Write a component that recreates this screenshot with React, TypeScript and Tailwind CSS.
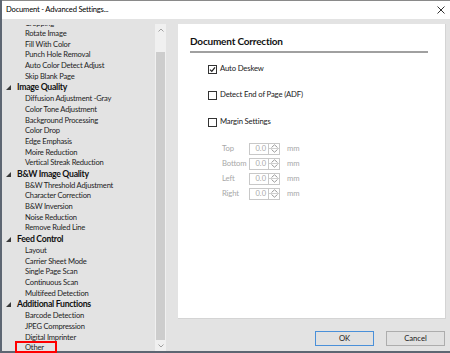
import React from "react";

const Tri = () => (
  <svg width="5" height="5" viewBox="0 0 5 5" className="shrink-0">
    <polygon points="5,0 5,5 0,5" fill="#3a3a3a" />
  </svg>
);

type Group = { title?: string; items: string[] };

const groups: Group[] = [
  { items: ["Cropping", "Rotate Image", "Fill With Color", "Punch Hole Removal", "Auto Color Detect Adjust", "Skip Blank Page"] },
  {
    title: "Image Quality",
    items: ["Diffusion Adjustment -Gray", "Color Tone Adjustment", "Background Processing", "Color Drop", "Edge Emphasis", "Moire Reduction", "Vertical Streak Reduction"],
  },
  { title: "B&W Image Quality", items: ["B&W Threshold Adjustment", "Character Correction", "B&W Inversion", "Noise Reduction", "Remove Ruled Line"] },
  { title: "Feed Control", items: ["Layout", "Carrier Sheet Mode", "Single Page Scan", "Continuous Scan", "Multifeed Detection"] },
  { title: "Additional Functions", items: ["Barcode Detection", "JPEG Compression", "Digital Imprinter", "Other"] },
];

const Check = ({ checked, label }: { checked?: boolean; label: string }) => (
  <div className="flex items-center h-[12px]">
    <div className="w-[9px] h-[9px] border border-[#333] bg-white flex items-center justify-center">
      {checked && (
        <svg width="7" height="7" viewBox="0 0 7 7">
          <polyline points="1,3.6 2.8,5.4 6,1.4" fill="none" stroke="#222" strokeWidth="1.3" />
        </svg>
      )}
    </div>
    <span className="ml-[3px] text-[7.7px] tracking-[-0.15px] text-[#1a1a1a] leading-none">{label}</span>
  </div>
);

const Spin = ({ label }: { label: string }) => (
  <div className="flex items-center h-[15px]">
    <span className="w-[27px] text-[7.7px] tracking-[-0.15px] text-[#a8a8a8] leading-none">{label}</span>
    <div className="w-[20px] h-[12px] border border-[#c8c8c8] bg-white flex items-center justify-end pr-[2px]">
      <span className="text-[7.5px] text-[#a8a8a8] leading-none">0.0</span>
    </div>
    <div className="w-[11px] h-[12px] border border-l-0 border-[#c8c8c8] bg-white flex flex-col">
      <div className="flex-1 flex items-center justify-center border-b border-[#d0d0d0]">
        <svg width="7" height="4" viewBox="0 0 7 4">
          <polyline points="0.5,3.5 3.5,0.8 6.5,3.5" fill="none" stroke="#9a9a9a" strokeWidth="1" />
        </svg>
      </div>
      <div className="flex-1 flex items-center justify-center">
        <svg width="7" height="4" viewBox="0 0 7 4">
          <polyline points="0.5,0.5 3.5,3.2 6.5,0.5" fill="none" stroke="#9a9a9a" strokeWidth="1" />
        </svg>
      </div>
    </div>
    <span className="ml-[7px] text-[7.7px] text-[#a8a8a8] leading-none">mm</span>
  </div>
);

export default function App() {
  return (
    <div className="w-[450px] h-[353px] bg-[#5d6672] relative overflow-hidden font-['Lato',sans-serif]">
      <div className="ml-[2px] w-[448px] h-[351px] flex flex-col bg-[#e3e3e3] border-t border-[#8a8a8a]">
        {/* title bar */}
        <div className="h-[18px] bg-white flex items-center justify-between pl-[4px] pr-[5px] shrink-0">
          <span className="text-[7.6px] tracking-[-0.2px] text-black leading-none">Document - Advanced Settings...</span>
          <svg width="8" height="8" viewBox="0 0 8 8">
            <path d="M0.5 0.5 L7.5 7.5 M7.5 0.5 L0.5 7.5" stroke="#333" strokeWidth="1" />
          </svg>
        </div>
        <div className="flex-1 flex min-h-0">
          {/* tree */}
          <div className="w-[153px] mt-[6px] overflow-hidden">
            <div className="mt-[-7px]">
              {groups.map((g, gi) => (
                <div key={gi}>
                  {g.title && (
                    <div className="h-[12px] flex items-center pl-[4px]">
                      <Tri />
                      <span className="ml-[6px] text-[8.7px] tracking-[-0.3px] font-bold text-[#111] leading-none">{g.title}</span>
                    </div>
                  )}
                  {g.items.map((it) => (
                    <div key={it} className="h-[10.65px] flex items-center pl-[23px]">
                      <span className="text-[7.6px] tracking-[-0.2px] text-[#1e1e1e] leading-none">{it}</span>
                    </div>
                  ))}
                </div>
              ))}
            </div>
          </div>
          {/* scrollbar */}
          <div className="w-[11px] mt-[5px] bg-[#f0f0f0] flex flex-col items-center">
            <div className="h-[12px] flex items-center justify-center">
              <svg width="6" height="4" viewBox="0 0 6 4">
                <polyline points="0.5,3.5 3,1 5.5,3.5" fill="none" stroke="#a0a0a0" strokeWidth="1" />
              </svg>
            </div>
            <div className="h-[16px]" />
            <div className="w-[9px] flex-1 bg-[#cdcdcd]" />
            <div className="h-[11px] flex items-center justify-center">
              <svg width="6" height="4" viewBox="0 0 6 4">
                <polyline points="0.5,0.5 3,3 5.5,0.5" fill="none" stroke="#a0a0a0" strokeWidth="1" />
              </svg>
            </div>
          </div>
          {/* right side */}
          <div className="flex-1 flex flex-col pl-[12px] pr-[4px] pt-[5px]">
            <div className="h-[295px] bg-white border-b border-r border-[#d4d4d4] pl-[12px] pr-[17px] pt-[12px]">
              <div className="text-[10px] tracking-[-0.2px] font-bold text-[#111] leading-none pb-[5px] border-b-2 border-[#a0a0a0]">
                Document Correction
              </div>
              <div className="pl-[18px] mt-[10px] flex flex-col">
                <Check checked label="Auto Deskew" />
                <div className="h-[14px]" />
                <Check label="Detect End of Page (ADF)" />
                <div className="h-[15px]" />
                <Check label="Margin Settings" />
                <div className="pl-[14px] mt-[13px] flex flex-col">
                  <Spin label="Top" />
                  <Spin label="Bottom" />
                  <Spin label="Left" />
                  <Spin label="Right" />
                </div>
              </div>
            </div>
            <div className="flex justify-end gap-[12px] mt-[12px] pr-[1px]">
              <button className="w-[59px] h-[15px] border border-[#4a90d9] bg-[#e1e1e1] text-[7.7px] text-[#1a1a1a] leading-none">OK</button>
              <button className="w-[59px] h-[15px] border border-[#adadad] bg-[#e1e1e1] text-[7.7px] text-[#1a1a1a] leading-none">Cancel</button>
            </div>
          </div>
        </div>
      </div>
      <div className="absolute left-[15px] top-[341px] w-[42px] h-[12px] border-2 border-[#ff0000]" />
    </div>
  );
}
